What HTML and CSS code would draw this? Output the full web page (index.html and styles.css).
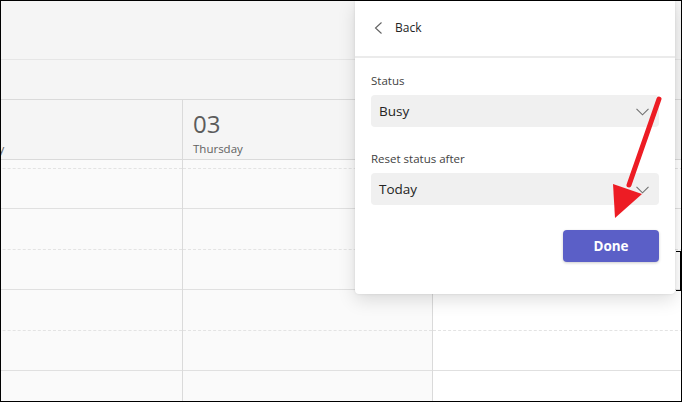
FILE: index.html
```html
<!DOCTYPE html>
<html>
<head>
<meta charset="utf-8">
<link rel="stylesheet" href="styles.css">
</head>
<body>
<div class="frame">
  <div class="calendar">
    <div class="top-bar"></div>
    <div class="sub-bar"></div>
    <div class="days">
      <div class="day">
        <div class="day-head"><div class="day-num">&nbsp;</div><div class="day-name">Wednesday</div></div>
        <div class="slot first"></div>
        <div class="slot full"></div>
        <div class="slot half"></div>
        <div class="slot full"></div>
        <div class="slot half"></div>
        <div class="slot full"></div>
        <div class="slot rest"></div>
      </div>
      <div class="day">
        <div class="day-head"><div class="day-num">03</div><div class="day-name">Thursday</div></div>
        <div class="slot first"></div>
        <div class="slot full"></div>
        <div class="slot half"></div>
        <div class="slot full"></div>
        <div class="slot half"></div>
        <div class="slot full"></div>
        <div class="slot rest"></div>
      </div>
      <div class="day today">
        <div class="day-head"></div>
        <div class="slot first"></div>
        <div class="slot full"></div>
        <div class="slot half"></div>
        <div class="slot full"></div>
        <div class="slot half"></div>
        <div class="slot full"></div>
        <div class="slot rest"></div>
      </div>
    </div>
  </div>

  <div class="edge-mark"></div>

  <div class="popup">
    <div class="popup-head">
      <svg class="back-icon" width="9" height="12" viewBox="0 0 9 12"><path d="M7.5 0.5 L1.5 6 L7.5 11.5" fill="none" stroke="#616161" stroke-width="1.1"/></svg>
      <span class="back-text">Back</span>
    </div>
    <div class="popup-body">
      <div class="field-label">Status</div>
      <div class="select">
        <span>Busy</span>
        <svg class="chev" width="13" height="8" viewBox="0 0 13 8"><path d="M0.5 0.8 L6.5 6.8 L12.5 0.8" fill="none" stroke="#707070" stroke-width="1.1"/></svg>
      </div>
      <div class="field-label second">Reset status after</div>
      <div class="select">
        <span>Today</span>
        <svg class="chev" width="13" height="8" viewBox="0 0 13 8"><path d="M0.5 0.8 L6.5 6.8 L12.5 0.8" fill="none" stroke="#707070" stroke-width="1.1"/></svg>
      </div>
      <div class="actions">
        <button class="done">Done</button>
      </div>
    </div>
  </div>

  <svg class="arrow" width="682" height="402" viewBox="0 0 682 402">
    <line x1="659" y1="99" x2="629" y2="185" stroke="#ed1c24" stroke-width="5" stroke-linecap="round"/>
    <polygon points="613,184 642,194 615,218" fill="#ed1c24"/>
  </svg>
</div>
</body>
</html>
```

FILE: styles.css
```css
* { box-sizing: border-box; }
html, body { margin: 0; padding: 0; }
body {
  width: 682px;
  height: 402px;
  overflow: hidden;
  font-family: "Segoe UI", "Open Sans", sans-serif;
  background: #fff;
}
.frame {
  position: relative;
  width: 682px;
  height: 402px;
  border: 1px solid #000;
  overflow: hidden;
  background: #fafafa;
}
.calendar {
  display: flex;
  flex-direction: column;
  height: 100%;
}
.top-bar {
  height: 59px;
  flex: none;
  background: #f5f5f5;
  border-bottom: 1px solid #e6e6e6;
}
.sub-bar {
  height: 40px;
  flex: none;
  background: #f5f5f5;
  border-bottom: 1px solid #dadada;
}
.days {
  flex: 1;
  display: grid;
  grid-template-columns: 251px 250px 260px;
  margin-left: -69px;
}
.day {
  display: flex;
  flex-direction: column;
  border-right: 1px solid #dadada;
  background: #fafafa;
}
.day.today { background: #fff; border-right: none; }
.day-head {
  height: 60px;
  flex: none;
  background: #f5f5f5;
  border-bottom: 1px solid #dadada;
  padding: 8px 0 0 10px;
  color: #616161;
}
.day-num {
  font-size: 24px;
  line-height: 32px;
  font-weight: 500;
  color: #5c5c5c;
}
.day-name {
  font-size: 11.5px;
  line-height: 16px;
  margin-top: 1px;
}
.slot { border-bottom: 1px solid #e0e0e0; flex: none; }
.slot.first { height: 9px; border-bottom: 1px dashed #e3e3e3; }
.slot.full { height: 40px; }
.slot.half { height: 41px; border-bottom: 1px dashed #e3e3e3; }
.slot.rest { flex: 1; border-bottom: none; }

.edge-mark {
  position: absolute;
  left: 675px;
  top: 250px;
  width: 5px;
  height: 40px;
  border: 1px solid #000;
  border-left: none;
}

.popup {
  position: absolute;
  top: 0;
  left: 354px;
  width: 320px;
  background: #fff;
  border-radius: 0 0 4px 4px;
  box-shadow: 0 6px 18px rgba(0,0,0,0.13), 0 0 3px rgba(0,0,0,0.10);
}
.popup-head {
  height: 57px;
  display: flex;
  align-items: center;
  padding-left: 19px;
  padding-bottom: 2px;
  border-bottom: 2px solid #ebebeb;
}
.back-icon { margin-right: 12px; }
.back-text {
  font-size: 12px;
  color: #242424;
}
.popup-body {
  padding: 15px 16px 32px;
}
.field-label {
  font-size: 11.5px;
  line-height: 16px;
  color: #424242;
  margin-bottom: 6px;
}
.field-label.second { margin-top: 24px; }
.select {
  height: 32px;
  background: #f0f0f0;
  border-radius: 4px;
  display: flex;
  align-items: center;
  justify-content: space-between;
  padding: 0 10px 0 8px;
  font-size: 13.5px;
  color: #242424;
}
.chev { margin-top: 1px; }
.actions {
  display: flex;
  justify-content: flex-end;
  margin-top: 25px;
}
.done {
  width: 96px;
  height: 32px;
  border: none;
  border-radius: 4px;
  background: #5b5fc7;
  color: #fff;
  font-family: "Segoe UI", "Open Sans", sans-serif;
  font-weight: 700;
  font-size: 13.5px;
  box-shadow: 0 1px 3px rgba(0,0,0,0.2);
  padding: 0;
}
.arrow {
  position: absolute;
  top: -1px;
  left: -1px;
}
```
